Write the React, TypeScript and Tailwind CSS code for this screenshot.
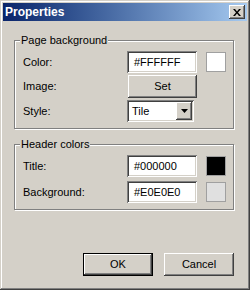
import React from 'react';

const raised =
  'bg-[#D4D0C8] shadow-[inset_-1px_-1px_#404040,inset_1px_1px_#ffffff,inset_-2px_-2px_#808080,inset_2px_2px_#D4D0C8]';
const sunken =
  'bg-white shadow-[inset_1px_1px_#808080,inset_-1px_-1px_#ffffff,inset_2px_2px_#404040,inset_-2px_-2px_#D4D0C8]';

const Field: React.FC<{ value: string }> = ({ value }) => (
  <div className={`${sunken} w-[70px] h-[22px] flex items-center pl-[7px] text-[11px] text-black`}>
    {value}
  </div>
);

const Swatch: React.FC<{ color: string }> = ({ color }) => (
  <div className={`ml-[9px] w-[20px] h-[20px] border border-[#A0A0A0] ${color}`} />
);

const Group: React.FC<{ title: string; className?: string; children: React.ReactNode }> = ({
  title,
  className = '',
  children,
}) => (
  <div
    className={`relative w-[220px] border border-[#808080] shadow-[inset_1px_1px_#ffffff,1px_1px_#ffffff] pl-[8px] pt-[10px] pb-[6px] ${className}`}
  >
    <span className="absolute top-[-7px] left-[5px] px-[1px] bg-[#D4D0C8] text-[11px] leading-[13px] text-black">
      {title}
    </span>
    {children}
  </div>
);

const Row: React.FC<{ label: string; children: React.ReactNode }> = ({ label, children }) => (
  <div className="flex items-center">
    <span className="w-[104px] text-[11px] text-black">{label}</span>
    {children}
  </div>
);

export default function App() {
  return (
    <div className="w-[250px] h-[290px] p-[3px] flex flex-col bg-[#D4D0C8] shadow-[inset_-1px_-1px_#404040,inset_1px_1px_#D4D0C8,inset_-2px_-2px_#808080,inset_2px_2px_#ffffff] font-['Liberation_Sans',Arial,sans-serif]">
      {/* title bar */}
      <div className="h-[18px] flex items-center justify-between pl-[2px] pr-[2px] bg-gradient-to-r from-[#0A246A] to-[#A6CAF0]">
        <span className="text-white font-bold text-[12px] leading-none">Properties</span>
        <div className={`${raised} w-[16px] h-[14px] flex items-center justify-center`}>
          <svg width="8" height="7" viewBox="0 0 8 7">
            <path d="M0 0H2L4 2.5L6 0H8L5 3.5L8 7H6L4 4.5L2 7H0L3 3.5Z" fill="#000" />
          </svg>
        </div>
      </div>

      <div className="flex flex-col pl-[11px]">
        <Group title="Page background" className="mt-[19px]">
          <div className="flex flex-col gap-[2px]">
            <Row label="Color:">
              <Field value="#FFFFFF" />
              <Swatch color="bg-white" />
            </Row>
            <Row label="Image:">
              <div className={`${raised} ml-[1px] w-[69px] h-[23px] flex items-center justify-center text-[11px] text-black`}>
                Set
              </div>
            </Row>
            <Row label="Style:">
              <div className={`${sunken} w-[67px] h-[22px] p-[2px] flex`}>
                <span className="flex-1 flex items-center pl-[3px] text-[11px] text-black">Tile</span>
                <div className={`${raised} w-[16px] h-full flex items-center justify-center`}>
                  <svg width="7" height="4" viewBox="0 0 7 4">
                    <path d="M0 0H7L3.5 4Z" fill="#000" />
                  </svg>
                </div>
              </div>
            </Row>
          </div>
        </Group>

        <Group title="Header colors" className="mt-[15px]">
          <div className="flex flex-col gap-[4px]">
            <Row label="Title:">
              <Field value="#000000" />
              <Swatch color="bg-black" />
            </Row>
            <Row label="Background:">
              <Field value="#E0E0E0" />
              <Swatch color="bg-[#E0E0E0]" />
            </Row>
          </div>
        </Group>

        <div className="mt-[43px] ml-[69px] flex gap-[11px]">
          <div className="w-[70px] h-[23px] border border-black">
            <div className={`${raised} w-full h-full flex items-center justify-center text-[11px] text-black`}>
              OK
            </div>
          </div>
          <div className={`${raised} w-[70px] h-[23px] flex items-center justify-center text-[11px] text-black`}>
            Cancel
          </div>
        </div>
      </div>
    </div>
  );
}
